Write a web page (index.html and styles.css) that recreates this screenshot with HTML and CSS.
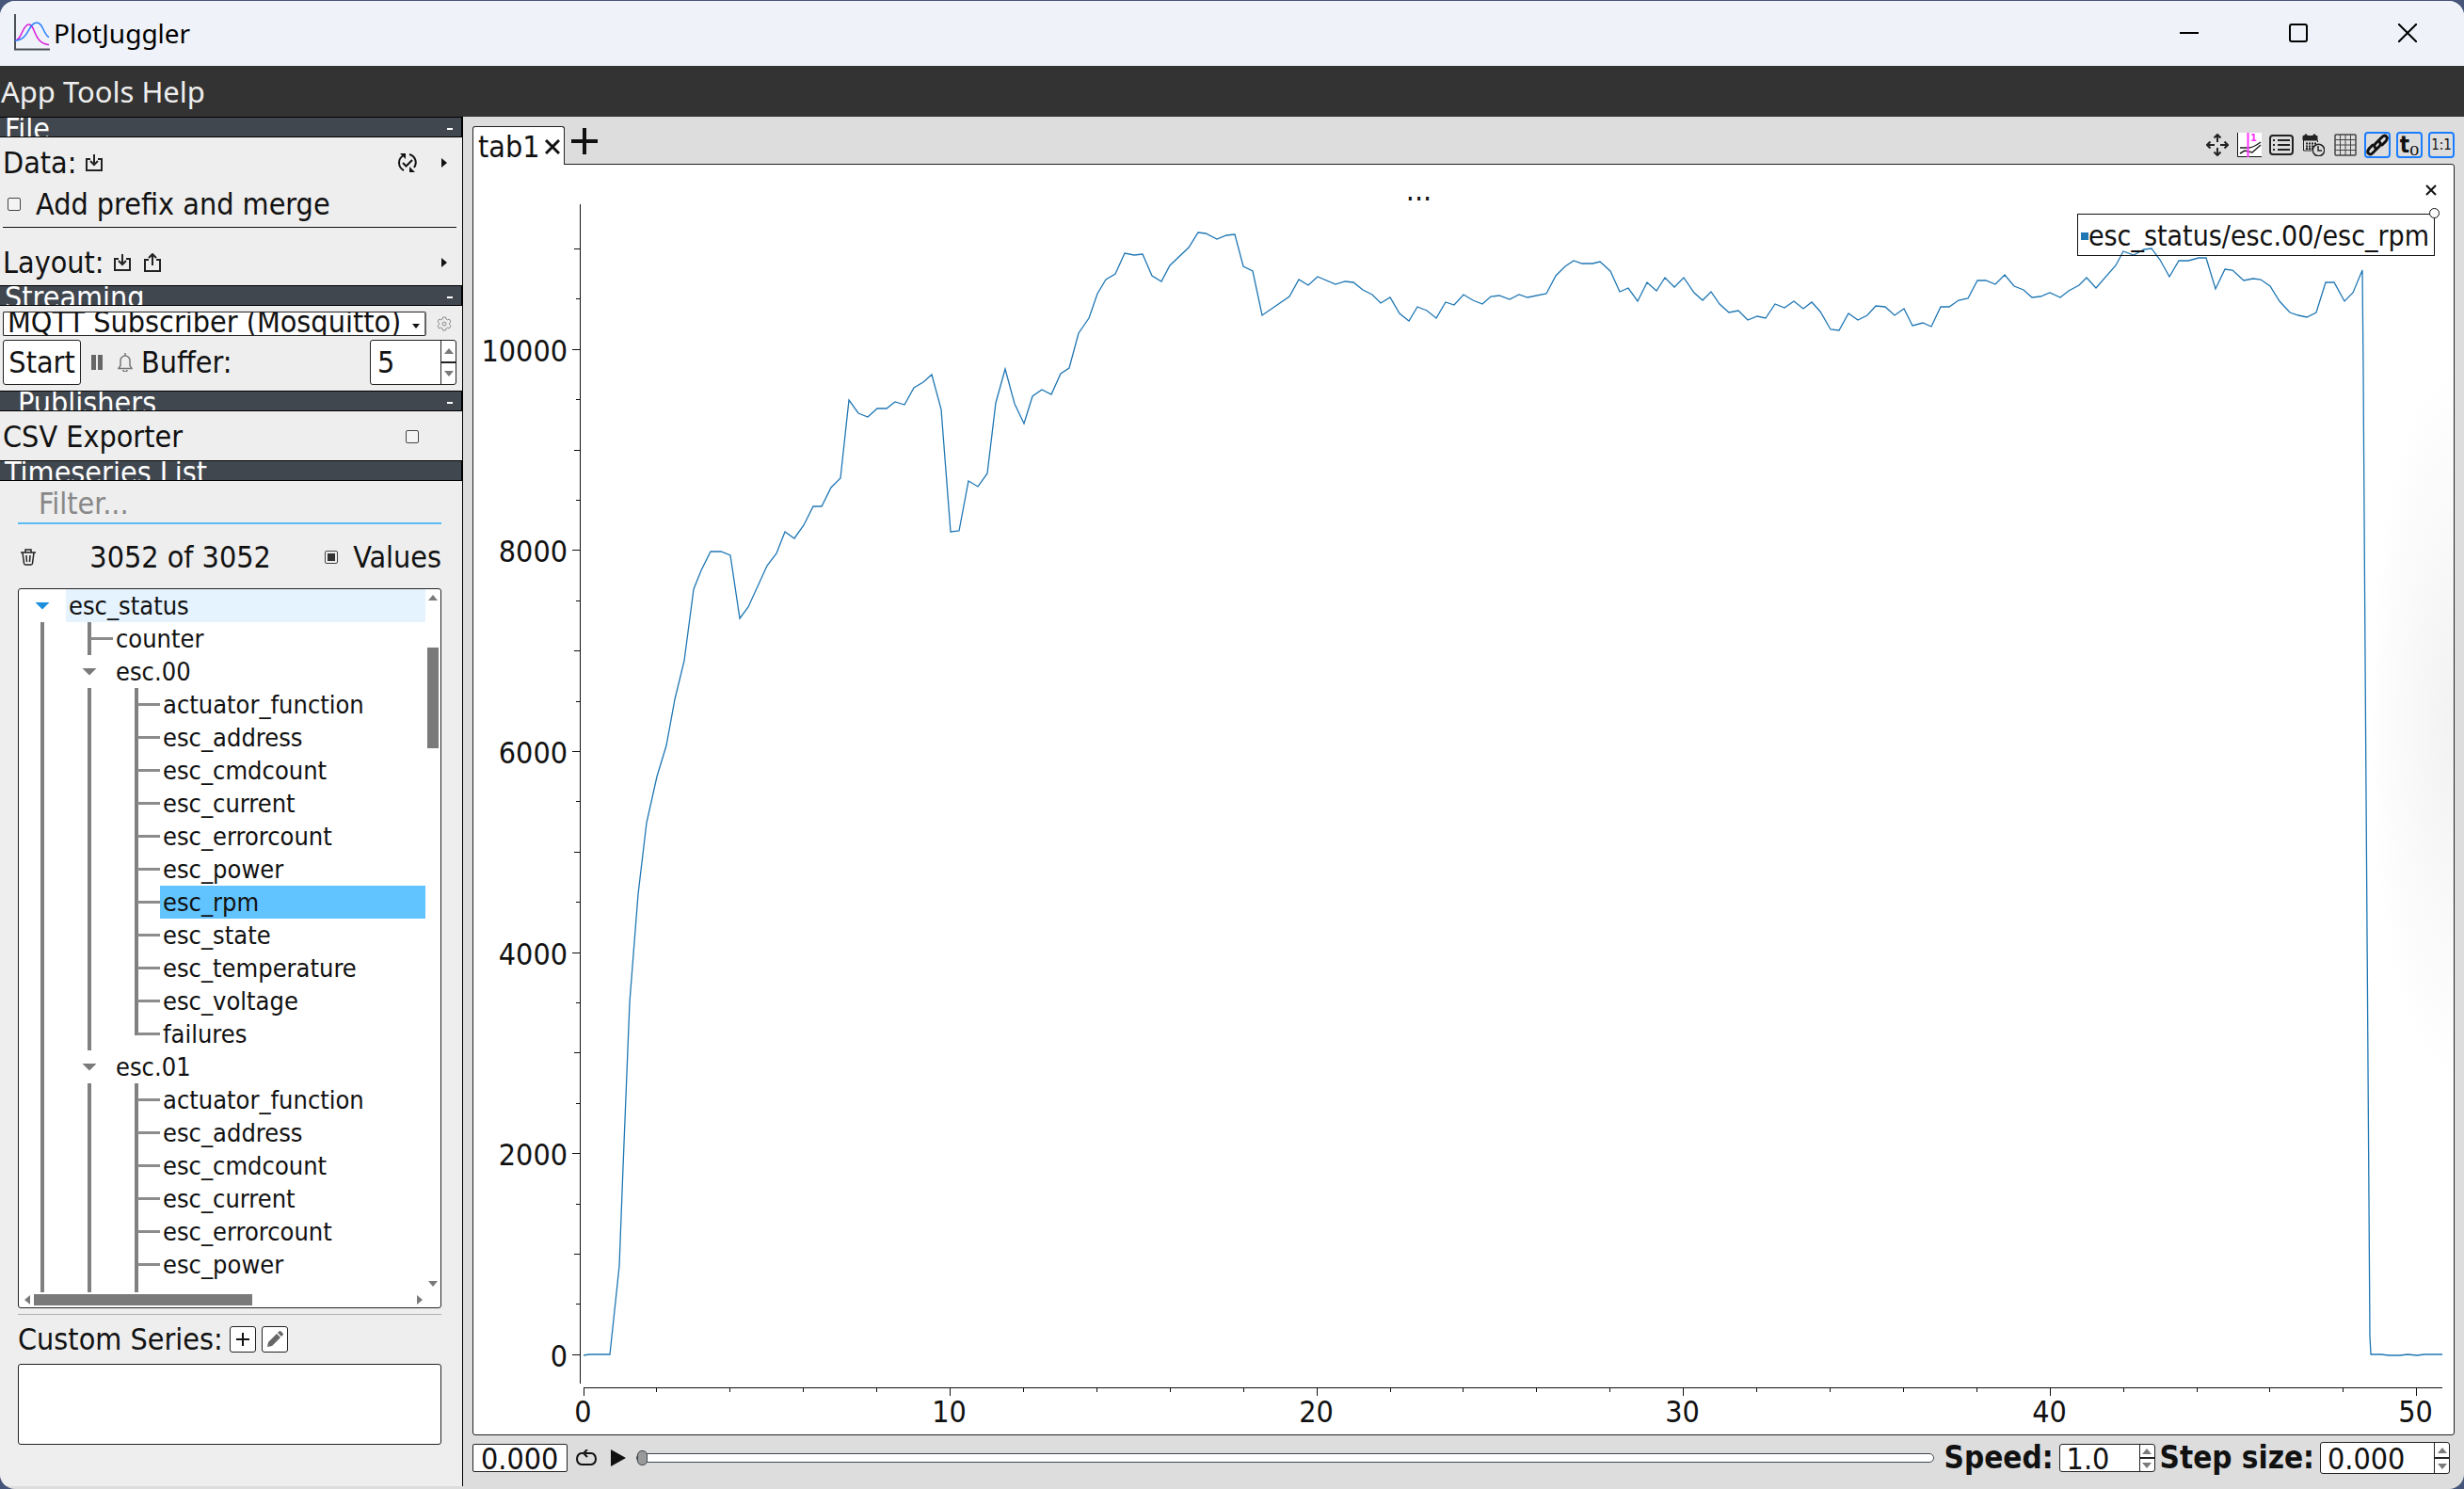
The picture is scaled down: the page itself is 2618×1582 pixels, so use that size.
FILE: index.html
```html
<!DOCTYPE html>
<html lang="en">
<head>
<meta charset="utf-8">
<title>PlotJuggler</title>
<link rel="stylesheet" href="styles.css">
</head>
<body>
<svg class="defs" aria-hidden="true">
  <symbol id="import" viewBox="0 0 18 18"><path d="M5 5H1v12h16V5h-4M9 0v11M5 7l4 4 4-4" fill="none" stroke="#222" stroke-width="2"/></symbol>
  <symbol id="export" viewBox="0 0 18 20"><path d="M5 7H1v12h16V7h-4M9 13V1M5 5l4-4 4 4" fill="none" stroke="#222" stroke-width="2"/></symbol>
  <symbol id="right" viewBox="0 0 6 10"><path d="M0 0l6 5-6 5z" fill="#111"/></symbol>
  <symbol id="up" viewBox="0 0 10 6"><path d="M0 6l5-6 5 6z" fill="#7a7a7a"/></symbol>
  <symbol id="down" viewBox="0 0 10 6"><path d="M0 0l5 6 5-6z" fill="#7a7a7a"/></symbol>
</svg>
<div class="window">
  <header class="titlebar">
    <svg class="logo" width="38" height="40" viewBox="0 0 38 40" fill="none">
      <path d="M1 0v37.500h37" stroke="#4c5058" stroke-width="2"/>
      <path d="M1 28C8 28 9 11 15.500 11C23 11 20 31 37 32.500" stroke="#d81bd8" stroke-width="1.500"/>
      <path d="M1 28C16 28 15 9 24 9C31 9 31 22 37 24.500" stroke="#2a7fff" stroke-width="1.500"/>
    </svg>
    <h1>PlotJuggler</h1>
    <div class="window-buttons">
      <button aria-label="Minimize"><svg width="20" height="20"><path d="M0 10h20" stroke="#000" stroke-width="2"/></svg></button>
      <button aria-label="Maximize"><svg width="20" height="20"><rect x="1" y="1" width="18" height="18" rx="2" fill="none" stroke="#000" stroke-width="2"/></svg></button>
      <button aria-label="Close"><svg width="20" height="20"><path d="M0 0l20 20M20 0L0 20" stroke="#000" stroke-width="2"/></svg></button>
    </div>
  </header>
  <nav class="menubar"><button>App</button><button>Tools</button><button>Help</button></nav>
  <div class="body">
    <aside class="sidebar">
      <div class="section-head"><h2>File</h2><button aria-label="Collapse File"></button></div>
      <div class="row data-row">
        <span>Data:</span>
        <button aria-label="Load data"><svg width="18" height="18"><use href="#import"/></svg></button>
        <button class="push" aria-label="Reload data"><svg width="20" height="20" viewBox="0 0 20 20" fill="none" stroke="#111" stroke-width="2"><path d="M6 18A9 9 0 0 1 5 2.500M12 1a9 9 0 0 1 5 14"/><path d="M5 10l3.500 3.500L15 7"/><path d="M2 0h6v6zM18 20h-6v-6z" fill="#111" stroke="none"/></svg></button>
        <button class="more" aria-label="Recent data"><svg width="6" height="10"><use href="#right"/></svg></button>
      </div>
      <label class="row prefix-row"><input type="checkbox"><span>Add prefix and merge</span></label>
      <hr>
      <div class="row layout-row">
        <span>Layout:</span>
        <button aria-label="Load layout"><svg width="18" height="18"><use href="#import"/></svg></button>
        <button class="save" aria-label="Save layout"><svg width="18" height="20"><use href="#export"/></svg></button>
        <button class="more push" aria-label="Recent layouts"><svg width="6" height="10"><use href="#right"/></svg></button>
      </div>

      <div class="section-head"><h2>Streaming</h2><button aria-label="Collapse Streaming"></button></div>
      <div class="row source-row">
        <div class="combo"><select aria-label="Streaming source"><option>MQTT Subscriber (Mosquitto)</option></select><svg width="8" height="5" viewBox="0 0 8 5"><path d="M0 0h8L4 5z" fill="#111"/></svg></div>
        <button aria-label="Source options"><svg width="16" height="16" viewBox="0 0 16 16" fill="none" stroke="#888"><path d="M6.500 1h3l.5 2 1.500.8 2-.6 1.500 2.600L13.500 7.200v1.600l1.500 1.400-1.500 2.600-2-.6-1.500.8-.5 2h-3l-.5-2-1.500-.8-2 .6L1 10.200l1.500-1.400V7.200L1 5.800l1.500-2.600 2 .6L6 3z"/><circle cx="8" cy="8" r="2"/></svg></button>
      </div>
      <div class="row buffer-row">
        <button class="start">Start</button>
        <button class="pause" aria-label="Pause"><svg width="12" height="16"><path d="M0 0h5v16H0zM7 0h5v16H7z" fill="#666"/></svg></button>
        <button class="bell" aria-label="Notifications"><svg width="16" height="20" viewBox="0 0 16 20" fill="none" stroke="#777" stroke-width="1.500"><path d="M1 16.500l2-3V8a5 5 0 0 1 10 0v5.500l2 3zM6 18a2 2 0 0 0 4 0M8 0v3"/></svg></button>
        <label for="buffer">Buffer:</label>
        <div class="spin buffer"><input id="buffer" type="text" value="5"><div class="steps"><button aria-label="Increase buffer"><svg width="10" height="6"><use href="#up"/></svg></button><button aria-label="Decrease buffer"><svg width="10" height="6"><use href="#down"/></svg></button></div></div>
      </div>

      <div class="section-head inset"><h2>Publishers</h2><button aria-label="Collapse Publishers"></button></div>
      <label class="row csv-row"><span>CSV Exporter</span><input type="checkbox"></label>

      <div class="section-head"><h2>Timeseries List</h2></div>
      <div class="series">
        <input class="filter" type="text" placeholder="Filter..." aria-label="Filter">
        <div class="row count-row">
          <button aria-label="Delete series"><svg width="16" height="18" viewBox="0 0 16 18" fill="none" stroke="#222" stroke-width="1.500"><path d="M0 4h16M5 3.500V1h6v2.500M2 4l1.500 11.500Q3.700 17 5 17h6q1.300 0 1.500-1.500L14 4M6 7l.5 7M10 7l-.5 7"/></svg></button>
          <span>3052 of 3052</span>
          <label><input type="checkbox" checked><span>Values</span></label>
        </div>
        <div class="tree">
          <ul role="tree">
            <li class="hover"><i class="open blue"></i><span>esc_status</span></li>
            <li><i class="v"></i><i class="v t"></i><span>counter</span></li>
            <li><i class="v"></i><i class="open"></i><span>esc.00</span></li>
            <li><i class="v"></i><i class="v"></i><i class="v t"></i><span>actuator_function</span></li>
            <li><i class="v"></i><i class="v"></i><i class="v t"></i><span>esc_address</span></li>
            <li><i class="v"></i><i class="v"></i><i class="v t"></i><span>esc_cmdcount</span></li>
            <li><i class="v"></i><i class="v"></i><i class="v t"></i><span>esc_current</span></li>
            <li><i class="v"></i><i class="v"></i><i class="v t"></i><span>esc_errorcount</span></li>
            <li><i class="v"></i><i class="v"></i><i class="v t"></i><span>esc_power</span></li>
            <li class="selected"><i class="v"></i><i class="v"></i><i class="v t"></i><span>esc_rpm</span></li>
            <li><i class="v"></i><i class="v"></i><i class="v t"></i><span>esc_state</span></li>
            <li><i class="v"></i><i class="v"></i><i class="v t"></i><span>esc_temperature</span></li>
            <li><i class="v"></i><i class="v"></i><i class="v t"></i><span>esc_voltage</span></li>
            <li><i class="v"></i><i class="v"></i><i class="v t end"></i><span>failures</span></li>
            <li><i class="v"></i><i class="open"></i><span>esc.01</span></li>
            <li><i class="v"></i><i class="v"></i><i class="v t"></i><span>actuator_function</span></li>
            <li><i class="v"></i><i class="v"></i><i class="v t"></i><span>esc_address</span></li>
            <li><i class="v"></i><i class="v"></i><i class="v t"></i><span>esc_cmdcount</span></li>
            <li><i class="v"></i><i class="v"></i><i class="v t"></i><span>esc_current</span></li>
            <li><i class="v"></i><i class="v"></i><i class="v t"></i><span>esc_errorcount</span></li>
            <li><i class="v"></i><i class="v"></i><i class="v t"></i><span>esc_power</span></li>
            <li aria-hidden="true"><i class="v"></i><i class="v"></i><i class="v t"></i></li>
          </ul>
          <div class="vscroll"><svg width="10" height="6"><use href="#up"/></svg><div class="track"><div class="thumb"></div></div><svg width="10" height="6"><use href="#down"/></svg></div>
          <div class="hscroll"><svg width="6" height="10" viewBox="0 0 6 10"><path d="M6 0L0 5l6 5z" fill="#7a7a7a"/></svg><div class="track"><div class="thumb"></div></div><svg width="6" height="10" viewBox="0 0 6 10"><path d="M0 0l6 5-6 5z" fill="#7a7a7a"/></svg></div>
        </div>
        <div class="divider"></div>
        <div class="row custom-row">
          <span>Custom Series:</span>
          <button class="boxed" aria-label="Add custom series"><svg width="14" height="14"><path d="M7 0v14M0 7h14" stroke="#111" stroke-width="2"/></svg></button>
          <button class="boxed" aria-label="Edit custom series"><svg width="18" height="18" viewBox="0 0 18 18"><path d="M1 17l1-5L11 3l4 4-9 9zM12 2l1.500-1.500q1-.8 2 0l2 2q.8 1 0 2L16 6z" fill="#666"/></svg></button>
        </div>
        <div class="custom-list"></div>
      </div>
    </aside>

    <main class="main">
      <div class="tabbar">
        <div class="tab"><span>tab1</span><button aria-label="Close tab"><svg width="16" height="16"><path d="M1 1l14 14M15 1L1 15" stroke="#111" stroke-width="3"/></svg></button></div>
        <button class="add-tab" aria-label="Add tab"><svg width="28" height="28"><path d="M14 0v28M0 14h28" stroke="#111" stroke-width="4"/></svg></button>
        <div class="tools">
          <button aria-label="Move"><svg width="24" height="24" viewBox="0 0 24 24" fill="none" stroke="#222" stroke-width="2"><path d="M12 1v8M12 15v8M1 12h8M15 12h8M8.500 4.500L12 1l3.500 3.500M8.500 19.500L12 23l3.500-3.500M4.500 8.500L1 12l3.500 3.500M19.500 8.500L23 12l-3.500 3.500"/></svg></button>
          <button aria-label="Tracker"><svg width="26" height="26" viewBox="0 0 26 26" fill="none"><path d="M0 0h26v26H0z" fill="#fff"/><path d="M.5 0v25.500H26" stroke="#111"/><path d="M3 16h9q5 0 13-6M3 22l5-3 8 2 9-8" stroke="#222" stroke-width="1.500"/><path d="M11.500 0v26" stroke="#f3f" stroke-width="2"/><text x="14" y="9" class="one">1</text></svg></button>
          <button aria-label="Legend"><svg width="26" height="22" viewBox="0 0 26 22" fill="none" stroke="#222" stroke-width="2"><rect x="1" y="1" width="24" height="20" rx="3"/><path d="M9 6h13M9 11h13M9 16h13M4 6h2M4 11h2M4 16h2"/></svg></button>
          <button aria-label="Date and time"><svg width="24" height="24" viewBox="0 0 24 24" fill="none" stroke="#222"><path d="M1 7V2.500h2V1h2v1.500h7V1h2v1.500h2V7z" fill="#222"/><path d="M1.500 7v11H10M16.500 7v2"/><path d="M4 10.500h12M4 13.500h8M4 16h7" stroke-width="2" stroke-dasharray="2 1"/><circle cx="17.500" cy="17.500" r="6.200" fill="#ddd" stroke-width="1.500"/><path d="M17 13v5h4" stroke-width="1.500"/></svg></button>
          <button aria-label="Grid"><svg width="24" height="24" viewBox="0 0 24 24" fill="none" stroke="#444"><rect x="1" y="1" width="22" height="22" rx="1" stroke-width="1.500"/><path d="M6.500 1v22M12 1v22M17.500 1v22M1 6.500h22M1 12h22M1 17.500h22"/></svg></button>
          <button class="on" aria-label="Link"><svg width="24" height="24" viewBox="0 0 24 24" fill="none" stroke="#111" stroke-width="3" stroke-linecap="round"><path d="M10 15.500Q7.500 13 10 10.500L17 3.500Q19.500 1 21.500 3T20.500 8.500L17 12"/><path d="M14 8.500Q16.500 11 14 13.500L7 20.500Q4.500 23 2.500 21T3.500 15.500L7 12"/></svg></button>
          <button class="on t0" aria-label="Time offset"><b>t</b><sub>o</sub></button>
          <button class="on ratio" aria-label="Aspect ratio">1:1</button>
        </div>
      </div>
      <section class="pane">
        <div class="plot-head"><span>...</span><button aria-label="Close plot"><svg width="12" height="12"><path d="M1 1l10 10M11 1L1 11" stroke="#111" stroke-width="2"/></svg></button></div>
        <svg class="plot" role="img" aria-label="esc_rpm over time">
          <svg id="curve" viewBox="620 217 1975 1253" preserveAspectRatio="none">
            <polyline points="620,1440 626,1439 648,1439 658,1345 662,1240 669,1065 678,950 687,874 698,825 708,792 717,743 727,702 737,626 745,606 755,586 766,586 776,590 786,657 795,645 815,601 825,588 834,565 844,572 854,558 864,538 873,538 883,518 893,508 902,425 912,439 922,443 932,434 942,434 951,427 961,430 971,412 981,406 990,398 1000,435 1010,565 1019,564 1029,511 1039,517 1049,503 1058,428 1068,392 1078,429 1088,450 1097,421 1107,414 1117,419 1127,397 1136,391 1146,354 1157,338 1166,312 1175,297 1185,291 1195,269 1205,271 1214,270 1224,293 1234,299 1243,282 1263,263 1273,247 1281,248 1293,254 1303,250 1312,249 1321,283 1331,288 1341,335 1370,315 1380,297 1390,303 1400,294 1419,302 1429,299 1438,300 1448,308 1458,313 1467,322 1477,316 1487,333 1497,341 1506,326 1516,330 1526,338 1536,321 1545,324 1555,313 1565,319 1575,323 1584,315 1593,314 1604,318 1614,313 1623,316 1643,312 1653,293 1663,283 1672,277 1681,280 1692,280 1700,278 1711,288 1721,310 1730,306 1740,320 1750,300 1760,309 1769,295 1779,305 1789,295 1800,311 1809,319 1818,310 1827,323 1837,332 1847,330 1857,340 1867,336 1876,338 1886,323 1896,327 1906,320 1916,328 1925,321 1934,331 1945,350 1954,351 1964,333 1974,340 1984,335 1993,325 2003,326 2013,335 2023,328 2032,346 2043,343 2052,347 2062,326 2071,326 2081,319 2091,317 2101,298 2110,298 2120,302 2130,292 2140,304 2150,308 2159,316 2168,315 2178,311 2189,316 2198,309 2209,303 2217,295 2227,306 2248,282 2256,267 2267,271 2278,265 2286,264 2295,276 2305,294 2315,277 2325,277 2336,274 2344,274 2354,307 2364,286 2372,287 2384,298 2394,296 2402,297 2412,304 2422,320 2433,332 2442,335 2451,337 2461,332 2471,300 2480,300 2491,320 2500,311 2510,287 2511,395 2513,700 2518,1420 2519,1439 2530,1439 2538,1440 2550,1440 2558,1439 2568,1440 2576,1439 2595,1439"/>
          </svg>
          <g id="axes"></g>
        </svg>
        <div class="legend"><i></i><span>esc_status/esc.00/esc_rpm</span><b></b></div>
      </section>
      <footer class="player">
        <input class="time" type="text" value="0.000" aria-label="Current time">
        <button class="loop" aria-label="Loop"><svg width="22" height="18" viewBox="0 0 22 18" fill="none" stroke="#111" stroke-width="2"><path d="M7 4H6a5 6 0 0 0 0 12h10a5 6 0 0 0 0-12h-6M12 0L8 4l4 4"/></svg></button>
        <button class="play" aria-label="Play"><svg width="16" height="18"><path d="M0 0l16 9-16 9z" fill="#111"/></svg></button>
        <input class="seek" type="range" min="0" max="50" value="0" aria-label="Position">
        <label for="speed">Speed:</label>
        <div class="spin speed"><input id="speed" type="text" value="1.0"><div class="steps"><button aria-label="Faster"><svg width="10" height="6"><use href="#up"/></svg></button><button aria-label="Slower"><svg width="10" height="6"><use href="#down"/></svg></button></div></div>
        <label for="step">Step size:</label>
        <div class="spin step"><input id="step" type="text" value="0.000"><div class="steps"><button aria-label="Larger step"><svg width="10" height="6"><use href="#up"/></svg></button><button aria-label="Smaller step"><svg width="10" height="6"><use href="#down"/></svg></button></div></div>
      </footer>
    </main>
  </div>
</div>
<script src="plot.js"></script>
</body>
</html>
```
FILE: plot.js
```js
// Draws both scales of the plot to fit the pane, and redraws on resize.
const plot = document.querySelector('.plot');
const axes = document.getElementById('axes');
const curve = document.getElementById('curve');
const M = { left: 117, right: 12, bottom: 54 };
const X_MAX = 50.7, Y_MIN = -287, Y_MAX = 11445;

function draw() {
  const w = plot.clientWidth - M.left - M.right;
  const h = plot.clientHeight - M.bottom;
  curve.setAttribute('x', M.left);
  curve.setAttribute('y', 0);
  curve.setAttribute('width', w);
  curve.setAttribute('height', h);

  const ax = M.left - 4, ay = h + 4;
  let lines = `M${ax + .5} 0V${h}M${M.left} ${ay + .5}H${M.left + w}`;
  let labels = '';
  for (let v = 0; v <= 11000; v += 500) {
    const y = Math.floor(h * (Y_MAX - v) / (Y_MAX - Y_MIN)) + .5;
    const len = v % 2000 === 0 ? 8 : v % 1000 === 0 ? 6 : 4;
    lines += `M${ax - len} ${y}H${ax}`;
    if (v % 2000 === 0) labels += `<text class="y" x="${ax - 13}" y="${y + 12}">${v}</text>`;
  }
  for (let v = 0; v <= 50; v += 2) {
    const x = Math.floor(M.left + w * v / X_MAX) + .5;
    lines += `M${x} ${ay}V${ay + (v % 10 ? 5 : 9)}`;
    if (v % 10 === 0) labels += `<text class="x" x="${x - 1}" y="${ay + 37}">${v}</text>`;
  }
  axes.innerHTML = `<path d="${lines}"/>${labels}`;
}
new ResizeObserver(draw).observe(plot);
draw();
```
FILE: styles.css
```css
*{box-sizing:border-box}
html,body{height:100%}
body{margin:0;padding-top:1px;background:#46557a;color:#111;font:32px/36px "DejaVu Sans Condensed","DejaVu Sans",sans-serif}
button,input,select{font:inherit;color:inherit;margin:0;padding:0;border:0;background:none;border-radius:0;outline:0}
button{display:flex;align-items:center;justify-content:center;flex:none}
svg{display:block;flex:none}
h1,h2{margin:0;font-weight:400}
ul{list-style:none;margin:0;padding:0}
.defs{display:none}
input[type=checkbox]{appearance:none;width:14px;height:14px;flex:none;border:1px solid #444;border-radius:2px;background:#f4f4f4}
input[type=checkbox]:checked{background:#333 content-box;padding:2px}

.window{height:100%;display:flex;flex-direction:column;background:#ddd;border-radius:16px;overflow:hidden}
.titlebar{height:69px;flex:none;display:flex;align-items:center;background:#eff3f9;padding:0 2px 2px 15px}
.titlebar h1{font:28px/40px "Noto Sans",sans-serif;margin-left:4px;color:#000}
.window-buttons{display:flex;margin-left:auto}
.window-buttons button{width:116px;height:66px}
.menubar{height:54px;flex:none;display:flex;gap:8px;background:#333;color:#eee;padding-left:1px;font:31px/54px "Noto Sans",sans-serif}
.body{flex:1;min-height:0;display:flex;padding-bottom:3px}

.sidebar{width:492px;flex:none;display:flex;flex-direction:column;background:#eee;border-right:1px solid #000}
.section-head{height:22px;flex:none;display:flex;justify-content:space-between;background:#40474f;border:1px solid #000;border-left:0;overflow:hidden;color:#fff}
.section-head h2{font-size:32px;line-height:24px;padding-left:5px}
.section-head.inset h2{padding-left:19px}
.section-head button{width:18px;height:24px}
.section-head button::before{content:"";width:6px;height:2px;margin-right:6px;background:#fff}
.row{display:flex;align-items:center;flex:none}
.push{margin-left:auto}
.data-row{height:54px;padding:0 16px 0 3px;gap:10px}
.more{margin-left:16px}
.more.push{margin-left:auto}
.prefix-row{height:34px;padding-left:8px;gap:16px}
.sidebar hr{height:1px;width:482px;border:0;margin:7px 0 12px 3px;background:#111;flex:none}
.layout-row{height:49px;padding:0 16px 0 3px;gap:10px}
.save{margin-left:4px}
.source-row{padding:6px 11px 4px 3px;justify-content:space-between}
.combo{width:450px;height:26px;display:grid;background:#fff;border:1px solid #222;border-right:2px solid #666;border-radius:2px;overflow:hidden}
.combo>*{grid-area:1/1}
.combo select{appearance:none;width:100%;height:36px;line-height:36px;padding-left:4px;margin-top:-8px}
.combo svg{place-self:center end;margin-right:5px}
.buffer-row{padding:0 6px 6px 3px}
.start{width:83px;height:48px;border:1px solid #222;border-radius:3px;background:#fff}
.pause{margin-left:11px}
.bell{margin:0 9px 0 16px}
.spin{display:flex;background:#fff;border:1px solid #222;border-radius:3px;overflow:hidden}
.spin input{flex:1;min-width:0;padding-left:7px}
.steps{width:16px;flex:none;display:flex;flex-direction:column;border-left:1px solid #222}
.steps button{flex:1}
.steps button+button{border-top:2px solid #222}
.buffer{width:92px;height:48px;margin-left:auto}
.csv-row{height:52px;padding:2px 46px 0 3px;justify-content:space-between}

.series{flex:1;min-height:0;display:flex;flex-direction:column;padding:0 22px 44px 19px}
.filter{height:46px;flex:none;padding:4px 0 0 22px;border-bottom:2px solid #5bbcf5}
.filter::placeholder{color:#888;opacity:1}
.count-row{height:68px;padding:2px 0 0 3px;justify-content:space-between}
.count-row label{display:flex;align-items:center;gap:16px}
.tree{flex:1;min-height:0;display:grid;grid-template:1fr 16px/1fr 16px;background:#fff;border:1px solid #222;border-radius:3px;font-size:27px;line-height:35px}
.tree ul{min-height:0;overflow:hidden}
.tree li{display:flex;height:35px}
.tree li span{flex:1;padding-left:3px}
.tree i{width:50px;flex:none;display:flex;align-items:center;justify-content:center}
.tree .v{background:linear-gradient(#808080,#808080) 23px 0/4px 100% no-repeat}
.tree .t::after{content:"";width:24px;height:3px;margin-left:26px;background:#8c8c8c}
.tree .end{background-size:4px 19px}
.tree .open::after{content:"";width:16px;height:8px;background:#7a7a7a;clip-path:polygon(0 0,100% 0,50% 100%)}
.tree .blue::after{background:#1a8fdc}
.hover span{background:#e5f3ff}
.selected span{background:#62c4ff}
.vscroll{display:flex;flex-direction:column;align-items:center;padding:6px 0}
.vscroll .track{flex:1;width:12px}
.vscroll .thumb{height:107px;margin-top:50px;background:#7a7a7a}
.hscroll{display:flex;align-items:center;padding:0 3px 0 6px;gap:4px}
.hscroll .track{flex:1;height:12px}
.hscroll .thumb{width:232px;height:12px;background:#7a7a7a}
.divider{height:1px;flex:none;margin:6px 0 12px;background:#b0b0b0}
.custom-row{height:28px;gap:6px}
.custom-row span{margin-right:1px}
.boxed{width:28px;height:28px;border:1px solid #222;border-radius:3px;background:#fff}
.custom-list{height:86px;flex:none;margin-top:12px;border:1px solid #222;border-radius:3px;background:#fff}

.main{flex:1;min-width:0;display:flex;flex-direction:column;padding:0 10px}
.tabbar{height:50px;flex:none;display:flex;align-items:flex-end}
.tab{height:41px;display:flex;align-items:center;gap:5px;margin-bottom:-1px;padding:2px 4px 0 5px;background:#fff;border:1px solid #222;border-bottom:0;border-radius:3px 3px 0 0;z-index:1}
.add-tab{margin:0 0 10px 7px}
.tools{display:flex;gap:6px;margin:0 0 6px auto}
.tools button{width:28px;height:28px}
.tools .on{border:2px solid #1a7dff;border-radius:4px}
.one{font:bold 10px "DejaVu Sans",sans-serif;fill:#f3f}
.t0{font-size:24px;line-height:24px}
.t0 sub{font:20px/18px "Liberation Serif",serif;padding-top:8px;vertical-align:baseline}
.tools .ratio{font-size:15px;line-height:24px}
.pane{position:relative;flex:1;min-height:0;display:flex;flex-direction:column;border:1px solid #222;border-radius:0 3px 3px 3px;background:radial-gradient(ellipse 90px 380px at 100% 44%,#f2f2f2,#fff)}
.plot-head{height:42px;flex:none;display:flex;align-items:center;padding:12px 18px 0 0}
.plot-head span{flex:1;text-align:center;padding-right:65px}
.plot{flex:1;min-height:0;width:100%}
#curve polyline{fill:none;stroke:#1f77b4;stroke-width:1.3;vector-effect:non-scaling-stroke}
#axes path{stroke:#111;fill:none;shape-rendering:crispEdges}
#axes text{fill:#111}
#axes .y{text-anchor:end}
#axes .x{text-anchor:middle}
.legend{position:absolute;top:52px;right:20px;height:45px;display:flex;align-items:center;padding:2px 5px 0 3px;border:1px solid #111;font-size:30px;line-height:40px}
.legend i{width:8px;height:8px;background:#1f77b4}
.legend b{position:absolute;top:-7px;right:-6px;width:11px;height:11px;border:1px solid #111;border-radius:50%;background:#fff}

.player{height:54px;flex:none;display:flex;align-items:center;padding:0 5px 6px 0}
.player label{font-weight:700;font-size:33px}
.player input[type=text]{padding-top:2px}
.time{width:101px;height:30px;padding-left:8px;border:1px solid #222;border-radius:2px;background:#fff}
.loop{margin-left:9px}
.play{margin:0 11px 0 15px}
.seek{appearance:none;flex:1;min-width:0;height:16px;margin-right:11px}
.seek::-webkit-slider-runnable-track{height:10px;border:1px solid #40474f;border-radius:5px;background:#fff}
.seek::-webkit-slider-thumb{appearance:none;width:11px;height:16px;margin-top:-4px;border:1px solid #40474f;border-radius:5px;background:#999}
.speed{width:102px;height:30px;margin:0 5px 0 6px}
.step{width:138px;height:34px;margin-left:6px}
```
